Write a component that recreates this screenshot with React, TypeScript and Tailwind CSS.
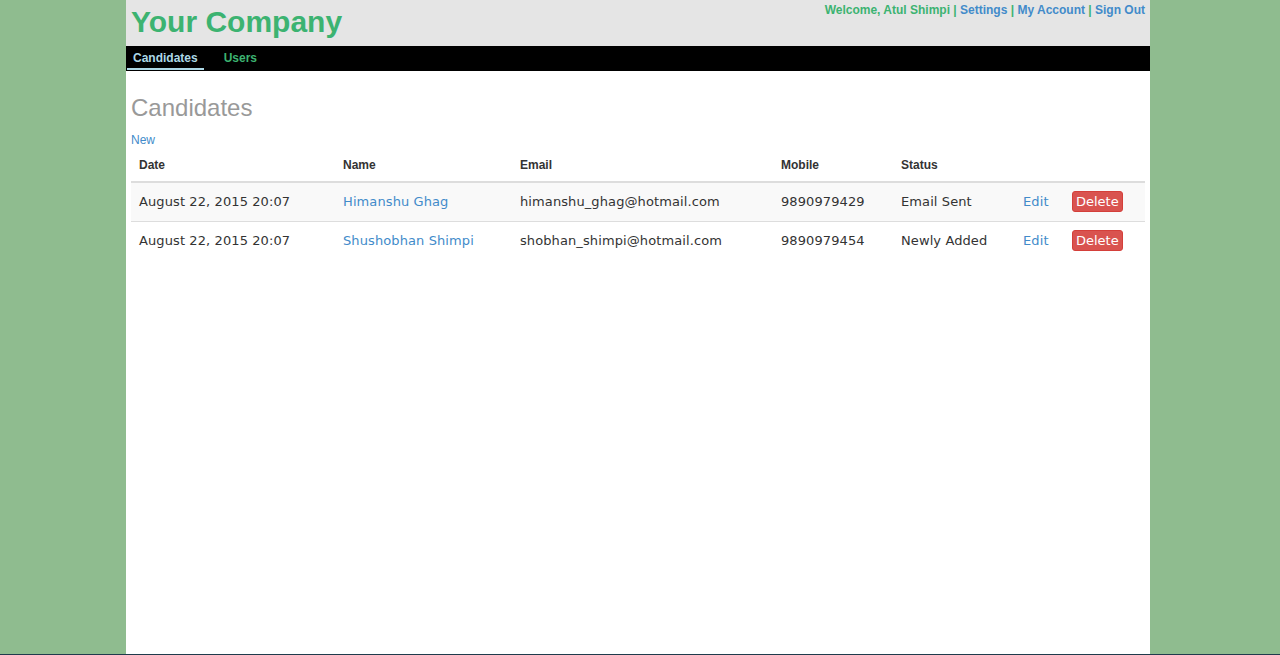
import React from "react";

const rows = [
  {
    date: "August 22, 2015 20:07",
    name: "Himanshu Ghag",
    email: "himanshu_ghag@hotmail.com",
    mobile: "9890979429",
    status: "Email Sent",
  },
  {
    date: "August 22, 2015 20:07",
    name: "Shushobhan Shimpi",
    email: "shobhan_shimpi@hotmail.com",
    mobile: "9890979454",
    status: "Newly Added",
  },
];

export default function App() {
  return (
    <div className="h-[655px] w-[1280px] flex flex-col bg-[#8fbc8f] overflow-hidden">
      <div className="flex-1 flex pl-[126px] min-h-0">
        <div className="w-[1024px] bg-white flex flex-col">
          {/* Header */}
          <div className="h-[46px] bg-[#e5e5e5] flex justify-between px-[5px] font-['Liberation_Sans',Arial,sans-serif]">
            <div className="mt-[5px] text-[30px] leading-[34px] font-bold text-[#3cb371]">Your Company</div>
            <div className="pt-[3px] text-[12px] leading-[14px] font-bold">
              <span className="text-[#3cb371]">Welcome, Atul Shimpi</span>
              <span className="text-[#3cb371]"> | </span>
              <a className="text-[#428bca]">Settings</a>
              <span className="text-[#3cb371]"> | </span>
              <a className="text-[#428bca]">My Account</a>
              <span className="text-[#3cb371]"> | </span>
              <a className="text-[#428bca]">Sign Out</a>
            </div>
          </div>
          {/* Nav */}
          <div className="h-[25px] bg-black flex items-start gap-[14px] pl-[1px] font-['Liberation_Sans',Arial,sans-serif] text-[12px] leading-[14px] font-bold">
            <div className="px-[6px] pt-[5px] pb-[3px] border-b-2 border-[#add8e6] text-[#add8e6]">Candidates</div>
            <div className="px-[6px] pt-[5px] pb-[3px] text-[#3cb371]">Users</div>
          </div>
          {/* Content */}
          <div className="px-[5px]">
            <h1 className="mt-[24px] mb-[11px] text-[24px] leading-[26px] text-[#999999] font-['Liberation_Sans',Arial,sans-serif] font-normal">
              Candidates
            </h1>
            <a className="block text-[12px] leading-[17px] text-[#428bca] font-['Liberation_Sans',Arial,sans-serif]">New</a>
            <table className="w-[1014px] table-fixed border-collapse">
              <colgroup>
                <col className="w-[204px]" />
                <col className="w-[177px]" />
                <col className="w-[261px]" />
                <col className="w-[120px]" />
                <col className="w-[122px]" />
                <col className="w-[49px]" />
                <col className="w-[81px]" />
              </colgroup>
              <thead>
                <tr className="border-b-2 border-[#dddddd] font-['Liberation_Sans',Arial,sans-serif] text-[12px] leading-[17px] font-bold text-[#333333] text-left">
                  <th className="px-2 pt-2 pb-[7px] font-bold">Date</th>
                  <th className="px-2 pt-2 pb-[7px] font-bold">Name</th>
                  <th className="px-2 pt-2 pb-[7px] font-bold">Email</th>
                  <th className="px-2 pt-2 pb-[7px] font-bold">Mobile</th>
                  <th className="px-2 pt-2 pb-[7px] font-bold">Status</th>
                  <th className="px-2 pt-2 pb-[7px]"></th>
                  <th className="px-2 pt-2 pb-[7px]"></th>
                </tr>
              </thead>
              <tbody className="font-['DejaVu_Sans',Verdana,sans-serif] text-[13px] tracking-[0.1px] text-[#333333]">
                {rows.map((r, i) => (
                  <tr
                    key={i}
                    className={`${i === 0 ? "bg-[#f9f9f9] h-[39px]" : "border-t border-[#dddddd] h-[38px]"}`}
                  >
                    <td className="px-2 align-middle whitespace-nowrap">{r.date}</td>
                    <td className="px-2 align-middle whitespace-nowrap text-[#428bca]">{r.name}</td>
                    <td className="px-2 align-middle whitespace-nowrap">{r.email}</td>
                    <td className="px-2 align-middle whitespace-nowrap">{r.mobile}</td>
                    <td className="px-2 align-middle whitespace-nowrap">{r.status}</td>
                    <td className="px-2 align-middle whitespace-nowrap text-[#428bca]">Edit</td>
                    <td className="px-2 align-middle whitespace-nowrap">
                      <span className="inline-flex items-center h-[21px] px-[3px] rounded-[3px] border border-[#d43f3a] bg-[#d9534f] text-white text-[13px] tracking-normal leading-[19px]">
                        Delete
                      </span>
                    </td>
                  </tr>
                ))}
              </tbody>
            </table>
          </div>
        </div>
      </div>
      <div className="h-[1px] bg-[#1f3b4c]"></div>
    </div>
  );
}
